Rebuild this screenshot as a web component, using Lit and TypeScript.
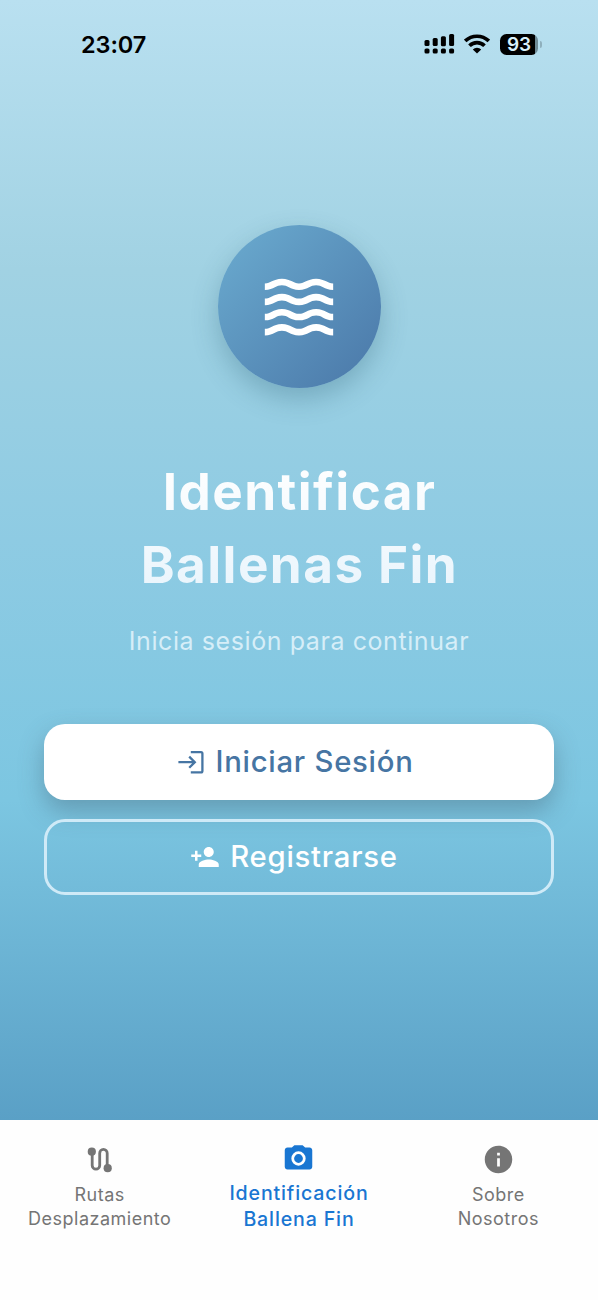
import { LitElement, html, svg, css } from "lit";
import { customElement } from "lit/decorators.js";

const WAVE =
  "M17 16.99c-1.35 0-2.2.42-2.95.8-.65.33-1.18.6-2.05.6-.9 0-1.4-.25-2.05-.6-.75-.38-1.57-.8-2.95-.8s-2.2.42-2.95.8c-.65.33-1.17.6-2.05.6v1.95c1.35 0 2.2-.42 2.95-.8.65-.33 1.17-.6 2.05-.6s1.4.25 2.05.6c.75.38 1.57.8 2.95.8s2.2-.42 2.95-.8c.65-.33 1.18-.6 2.05-.6.9 0 1.4.25 2.05.6.75.38 1.58.8 2.95.8v-1.95c-.9 0-1.4-.25-2.05-.6-.75-.38-1.6-.8-2.95-.8z";

@customElement("app-root")
export class AppRoot extends LitElement {
  static styles = css`
    :host {
      display: flex;
      flex-direction: column;
      width: 598px;
      height: 1300px;
      overflow: hidden;
      font-family: Inter, "Liberation Sans", sans-serif;
      background: #fefefe;
    }
    svg { display: block; flex: none; }
    .screen {
      height: 1120px;
      display: flex;
      flex-direction: column;
      align-items: center;
      background: linear-gradient(180deg, #b9e0f0 0, #a1d2e3 270px, #8ecbe3 540px, #7cc6e1 800px, #5aa0c6 1120px);
    }
    .status {
      align-self: stretch;
      box-sizing: border-box;
      height: 88px;
      padding: 0 56px 0 81px;
      display: flex;
      align-items: center;
      color: #000;
    }
    .time { flex: 1; padding-top: 2px; font-size: 23.5px; font-weight: 600; line-height: 30px; letter-spacing: -.1px; }
    .signal { margin-right: 9px; }
    .wifi { margin-right: 10px; }
    .battery {
      width: 38px; height: 21px; border-radius: 6.5px;
      background: linear-gradient(90deg, #000 93%, #6f8b96 93%);
      color: #d8f0fa; font-size: 19px; font-weight: 600; line-height: 21px; text-align: center;
    }
    .cap { width: 2px; height: 7px; margin-left: 2px; border-radius: 0 2px 2px 0; background: #8fb0bd; }
    .badge {
      width: 163px; height: 163px; margin-top: 137px; border-radius: 50%;
      display: flex; align-items: center; justify-content: center;
      background: linear-gradient(135deg, #6bacd0, #4a77a8);
      box-shadow: 0 11px 27px rgba(40, 90, 110, .3);
      color: #fff;
    }
    h1 {
      margin: 67px 0 0; padding-left: 1px; font-size: 51.3px; line-height: 73px; font-weight: 700;
      letter-spacing: 1.4px; text-align: center;
      background: linear-gradient(180deg, #fff, #e8f4fc);
      -webkit-background-clip: text; background-clip: text; color: transparent;
    }
    .line { display: block; }
    .hint { margin: 21px 0 0; font-size: 25px; line-height: 38px; font-weight: 400; letter-spacing: .58px; color: #d6eef8; }
    .actions { width: 510px; margin-top: 64px; display: flex; flex-direction: column; gap: 19px; }
    .btn {
      box-sizing: border-box; height: 76px; border: 0; padding: 0 8px 0 0; border-radius: 21px;
      display: flex; align-items: center; justify-content: center; gap: 9px;
      font: 550 29.3px/38px Inter, sans-serif; letter-spacing: .75px;
    }
    .primary { background: #fff; color: #4675a3; box-shadow: 0 11px 24px rgba(70, 105, 125, .45); }
    .outline { background: transparent; color: #fff; border: 3px solid #cfeaf7; padding-right: 10px; gap: 10px; }
    nav { flex: 1; display: grid; grid-template-columns: 1fr 1fr 1fr; background: #fefefe; }
    .tab { display: flex; flex-direction: column; align-items: center; padding-top: 23px; color: #757575; }
    .label { margin-top: 6.5px; font-size: 18px; line-height: 24.5px; letter-spacing: .5px; text-align: center; }
    .active { color: #1976d2; padding-top: 22px; }
    .active .label { font-weight: 550; font-size: 19.6px; line-height: 26px; letter-spacing: .85px; margin-top: 5px; }
  `;

  render() {
    return html`
      <main class="screen">
        <div class="status">
          <div class="time">23:07</div>
          <svg class="signal" width="31" height="20" viewBox="0 0 31 20" fill="#000">
            ${[0, 1, 2, 3].map((i) => svg`
              <rect x=${0.5 + i * 8.2} y=${[6, 4, 2.2, 0][i]} width="5" height=${[6, 8, 10, 12][i]} rx="1.5" />
              <rect x=${0.5 + i * 8.2} y="14.5" width="5" height="5" rx="1.6" />`)}
          </svg>
          <svg class="wifi" width="26" height="20" viewBox="0 0 26 20" fill="none" stroke="#000" stroke-width="3.7">
            <path d="M1.2 7a17 17 0 0 1 23.6 0M5.5 11.8a10.6 10.6 0 0 1 15 0" />
            <path d="M13 19.6l-4.2-4.2a5.9 5.9 0 0 1 8.4 0z" fill="#000" stroke="none" />
          </svg>
          <div class="battery">93</div>
          <div class="cap"></div>
        </div>
        <div class="badge">
          <svg width="82" height="82" viewBox="0 0 24 24" fill="currentColor">
            ${[0, 1, 2, 3].map((i) => svg`<path d=${WAVE} transform="translate(0 ${-4.43 * i})" />`)}
          </svg>
        </div>
        <h1><span class="line">Identificar</span><span class="line">Ballenas Fin</span></h1>
        <p class="hint">Inicia sesión para continuar</p>
        <div class="actions">
          <button class="btn primary">
            <svg width="30" height="30" viewBox="0 0 30 30" fill="none" stroke="currentColor" stroke-width="2.3"><path d="M14.8 5.1H25a1.4 1.4 0 0 1 1.4 1.4V24a1.4 1.4 0 0 1-1.4 1.4H14.8M2.4 15.2H18.6M13.2 9.6l5.6 5.6-5.6 5.6" /></svg>
            <span>Iniciar Sesión</span>
          </button>
          <button class="btn outline">
            <svg width="30" height="30" viewBox="0 0 24 24" fill="currentColor"><path d="M15 12c2.21 0 4-1.79 4-4s-1.79-4-4-4-4 1.79-4 4 1.79 4 4 4zm-9-2V7H4v3H1v2h3v3h2v-3h3v-2H6zm9 4c-2.67 0-8 1.34-8 4v2h16v-2c0-2.66-5.33-4-8-4z" /></svg>
            <span>Registrarse</span>
          </button>
        </div>
      </main>
      <nav>
        <div class="tab">
          <svg width="33" height="33" viewBox="0 0 33 33" fill="currentColor">
            <path d="M9.2 9v13.4a3.75 3.75 0 0 0 7.5 0V10.2a3.75 3.75 0 0 1 7.5 0V25" fill="none" stroke="currentColor" stroke-width="2.8" />
            <circle cx="8.8" cy="8.7" r="4.1" />
            <circle cx="24.7" cy="25.2" r="4.1" />
          </svg>
          <div class="label">Rutas<br />Desplazamiento</div>
        </div>
        <div class="tab active">
          <svg width="33" height="33" viewBox="0 0 24 24" fill="currentColor"><path fill-rule="evenodd" d="M20 4h-3.17L15 2.3H9L7.17 4H4c-1.1 0-2 .9-2 2v12c0 1.1.9 2 2 2h16c1.1 0 2-.9 2-2V6c0-1.1-.9-2-2-2zm-8 13.2a5.2 5.2 0 1 1 0-10.4 5.2 5.2 0 0 1 0 10.4zm0-2a3.2 3.2 0 1 0 0-6.4 3.2 3.2 0 0 0 0 6.4z" /></svg>
          <div class="label">Identificación<br />Ballena Fin</div>
        </div>
        <div class="tab">
          <svg width="33" height="33" viewBox="0 0 24 24" fill="currentColor"><path d="M12 2C6.48 2 2 6.48 2 12s4.48 10 10 10 10-4.48 10-10S17.52 2 12 2zm1 15h-2v-6h2v6zm0-8h-2V7h2v2z" /></svg>
          <div class="label">Sobre<br />Nosotros</div>
        </div>
      </nav>
    `;
  }
}
